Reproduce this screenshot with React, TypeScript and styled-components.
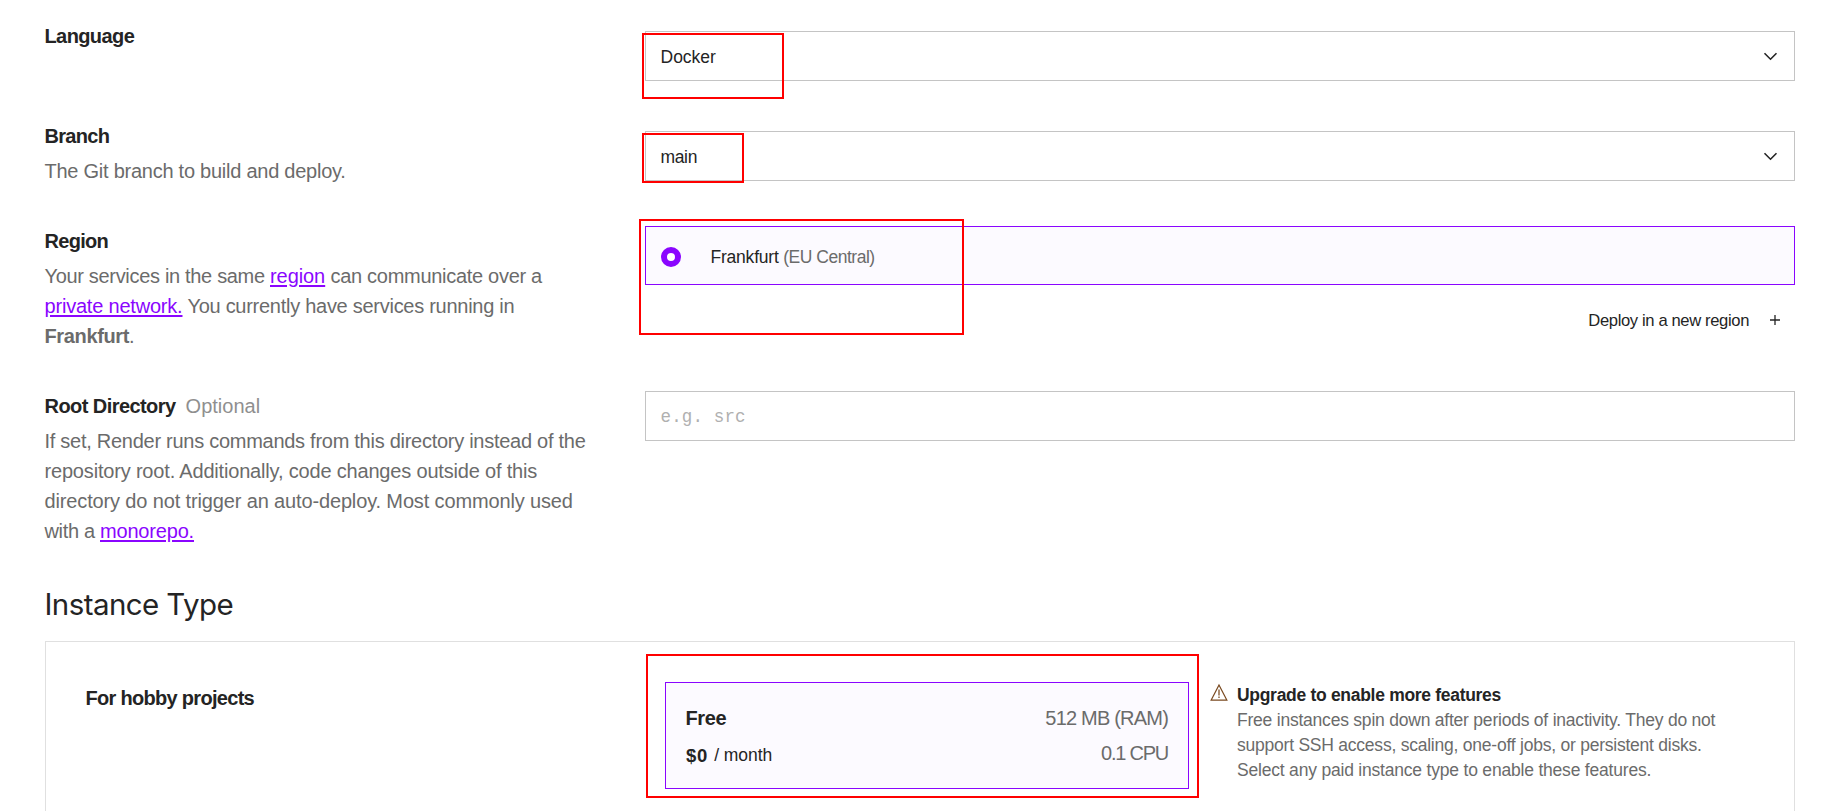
import React from 'react';
import styled, { createGlobalStyle, css } from 'styled-components';

const ink = '#242424';
const muted = '#6b6b6b';
const purple = '#8a05ff';

const GlobalStyle = createGlobalStyle`
  * { box-sizing: border-box; }
  body {
    margin: 0;
    background: #fff;
    color: ${ink};
    font: 20px/30px "Liberation Sans", Arial, sans-serif;
  }
`;

const Page = styled.main`
  height: 811px;
  overflow: hidden;
  padding: 21px 50px 0 45px;
`;

const Fields = styled.div`
  display: flex;
  flex-direction: column;
  gap: 40px;
`;

const Field = styled.section`
  display: grid;
  grid-template-columns: 600px 1fr;
  align-items: start;
`;

const Label = styled.h3`
  margin: 0;
  font-size: 20px;
  line-height: 30px;
  font-weight: 700;
  white-space: nowrap;
  text-indent: -0.5px;
`;

const Description = styled.p`
  margin: 5px 0 0 -0.5px;
  color: ${muted};
  white-space: nowrap;
`;

const Text = styled.span<{ $track?: number }>`
  letter-spacing: ${(p) => p.$track ?? 0}px;
`;

const Optional = styled.span`
  margin-left: 10px;
  color: #8f8f8f;
  font-weight: 400;
`;

const Link = styled.a<{ $track: number }>`
  color: ${purple};
  letter-spacing: ${(p) => p.$track}px;
  text-decoration: underline;
  text-decoration-thickness: 2px;
  text-underline-offset: 2px;
`;

const Control = styled.div<{ $inset?: boolean }>`
  position: relative;
  padding-top: ${(p) => (p.$inset ? 10 : 0)}px;
`;

const box = css`
  display: flex;
  align-items: center;
  border: 1px solid #c4c4c4;
  background: #fff;
  font-size: 17.5px;
  line-height: 25px;
`;

const Select = styled.div`
  ${box}
  height: 50px;
  justify-content: space-between;
  padding: 2px 16.5px 0 14.5px;

  svg { margin-top: -2px; }
`;

const Input = styled.input`
  ${box}
  display: block;
  width: 100%;
  height: 50px;
  padding: 2px 14.5px 0;
  border-radius: 0;
  outline: 0;
  font-family: "Liberation Mono", monospace;
  letter-spacing: 0.15px;
  &::placeholder { color: #b0b0b0; opacity: 1; }
`;

const RegionOption = styled.div`
  ${box}
  height: 59px;
  gap: 29.5px;
  padding: 3px 15px 0;
  border-color: ${purple};
  background: #fcfaff;
`;

const Radio = styled.span`
  width: 20px;
  height: 20px;
  border: 6px solid ${purple};
  border-radius: 50%;
  background: #fff;
`;

const Soft = styled(Text)`
  color: ${muted};
`;

const DeployLink = styled.div`
  display: flex;
  align-items: center;
  justify-content: flex-end;
  gap: 21px;
  margin-top: 22px;
  padding-right: 15px;
  font-size: 16.6px;
  line-height: 25px;
  height: 25px;

  span { padding-top: 2px; }
`;

const Highlight = styled.div<{ $x: number; $y: number; $w: number; $h: number }>`
  position: absolute;
  left: ${(p) => p.$x}px;
  top: ${(p) => p.$y}px;
  width: ${(p) => p.$w}px;
  height: ${(p) => p.$h}px;
  border: 2px solid #f00;
  pointer-events: none;
`;

const Title = styled.h2`
  margin: 39px 0 17px;
  font: 400 29.5px/39px Inter, sans-serif;
  letter-spacing: -0.58px;
  text-indent: -0.5px;
`;

const InstanceCard = styled.section`
  display: grid;
  grid-template-columns: 579px 524px 1fr;
  align-items: start;
  height: 240px;
  padding: 40px;
  border: 1px solid #e0e0e0;
`;

const GroupLabel = styled(Label)`
  padding-top: 1px;
`;

const PlanWrap = styled.div`
  position: relative;
`;

const Plan = styled.div`
  display: flex;
  justify-content: space-between;
  height: 107px;
  padding: 20px;
  border: 1px solid ${purple};
  background: #fcfaff;
`;

const PlanSpecs = styled.div`
  display: flex;
  flex-direction: column;
  align-items: flex-end;
  gap: 5px;
  color: ${muted};
`;

const Price = styled.div`
  display: flex;
  gap: 6px;
  margin-top: 10px;
  font-size: 17.5px;
  line-height: 25px;
`;

const Amount = styled.b`
  font-size: 18.5px;
  letter-spacing: 0.8px;
`;

const Notice = styled.aside`
  display: flex;
  gap: 9px;
  padding-left: 21px;
  font-size: 17.5px;
  line-height: 25px;
  color: ${muted};
  white-space: nowrap;
`;

const NoticeBody = styled.div`
  padding-top: 1px;
`;

const NoticeTitle = styled.strong`
  display: block;
  color: ${ink};
  letter-spacing: -0.3px;
`;

const Chevron = () => (
  <svg width="15" height="15" viewBox="0 0 15 15" fill="none" stroke={ink} strokeWidth="1.6">
    <path d="M1.5 4.2 7.5 10.2l6-6" />
  </svg>
);

const Plus = () => (
  <svg width="10" height="10" viewBox="0 0 10 10" fill="none" stroke={ink} strokeWidth="1.3">
    <path d="M5 0v10M0 5h10" />
  </svg>
);

const Warning = () => (
  <svg width="18" height="20" viewBox="0 0 18 20" fill="none" stroke="#7a4a20" strokeWidth="1.25">
    <path d="M9 3 1.2 18h15.6zM9 7.5v6M9 14.6V16" />
  </svg>
);

export default function App() {
  return (
    <Page>
      <GlobalStyle />
      <Fields>
        <Field>
          <Label><Text $track={-0.6}>Language</Text></Label>
          <Control $inset>
            <Select><Text $track={0}>Docker</Text><Chevron /></Select>
            <Highlight $x={-3} $y={12} $w={142} $h={66} />
          </Control>
        </Field>

        <Field>
          <div>
            <Label><Text $track={-0.68}>Branch</Text></Label>
            <Description><Text $track={-0.25}>The Git branch to build and deploy.</Text></Description>
          </div>
          <Control $inset>
            <Select><Text $track={-0.35}>main</Text><Chevron /></Select>
            <Highlight $x={-3} $y={12} $w={102} $h={50} />
          </Control>
        </Field>

        <Field>
          <div>
            <Label><Text $track={-0.7}>Region</Text></Label>
            <Description>
              <Text $track={-0.32}>Your services in the same </Text>
              <Link $track={-0.07}>region</Link>
              <Text $track={-0.29}> can communicate over a</Text><br />
              <Link $track={-0.2}>private network.</Link>
              <Text $track={-0.27}> You currently have services running in</Text><br />
              <b><Text $track={-0.36}>Frankfurt</Text></b>.
            </Description>
          </div>
          <Control>
            <RegionOption>
              <Radio />
              <span>
                <Text $track={-0.22}>Frankfurt </Text>
                <Soft $track={-0.48}>(EU Central)</Soft>
              </span>
            </RegionOption>
            <DeployLink><Text $track={-0.37}>Deploy in a new region</Text><Plus /></DeployLink>
            <Highlight $x={-6} $y={-7} $w={325} $h={116} />
          </Control>
        </Field>

        <Field>
          <div>
            <Label><Text $track={-0.56}>Root Directory</Text><Optional>Optional</Optional></Label>
            <Description>
              <Text $track={-0.27}>If set, Render runs commands from this directory instead of the</Text><br />
              <Text $track={-0.18}>repository root. Additionally, code changes outside of this</Text><br />
              <Text $track={-0.14}>directory do not trigger an auto-deploy. Most commonly used</Text><br />
              <Text $track={-0.33}>with a </Text><Link $track={-0.18}>monorepo.</Link>
            </Description>
          </div>
          <Control><Input placeholder="e.g. src" /></Control>
        </Field>
      </Fields>

      <Title>Instance Type</Title>
      <InstanceCard>
        <GroupLabel><Text $track={-0.7}>For hobby projects</Text></GroupLabel>
        <PlanWrap>
          <Plan>
            <div>
              <Label><Text $track={-0.4}>Free</Text></Label>
              <Price><Amount>$0</Amount><Text $track={-0.05}>/ month</Text></Price>
            </div>
            <PlanSpecs>
              <Text $track={-0.8}>512 MB (RAM)</Text>
              <Text $track={-1.23}>0.1 CPU</Text>
            </PlanSpecs>
          </Plan>
          <Highlight $x={-19} $y={-28} $w={553} $h={144} />
        </PlanWrap>
        <Notice>
          <Warning />
          <NoticeBody>
            <NoticeTitle>Upgrade to enable more features</NoticeTitle>
            <Text $track={-0.22}>Free instances spin down after periods of inactivity. They do not</Text><br />
            <Text $track={-0.23}>support SSH access, scaling, one-off jobs, or persistent disks.</Text><br />
            <Text $track={-0.2}>Select any paid instance type to enable these features.</Text>
          </NoticeBody>
        </Notice>
      </InstanceCard>
    </Page>
  );
}
